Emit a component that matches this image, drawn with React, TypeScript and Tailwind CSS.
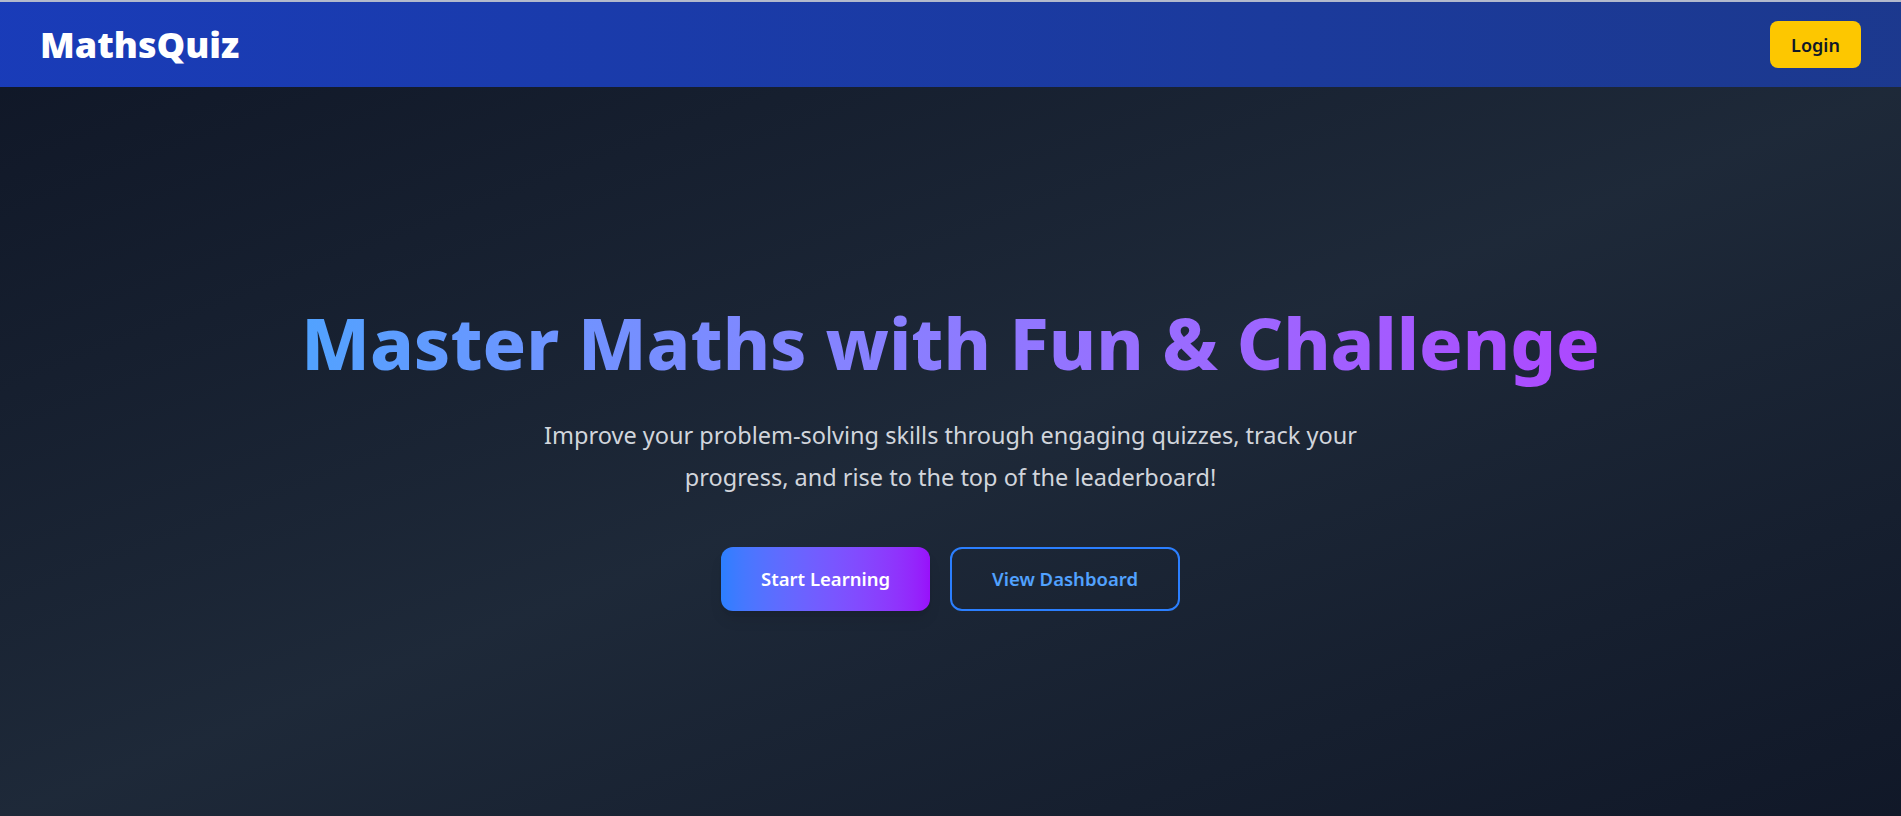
import React from 'react';

const Navbar: React.FC = () => (
  <nav className="bg-gradient-to-r from-blue-800 to-blue-900 shadow-lg">
    <div className="flex items-center justify-between px-10 h-[85px]">
      <span className="text-[36px] font-black text-white">MathsQuiz</span>
      <button className="bg-yellow-400 text-gray-900 text-lg font-semibold rounded-lg w-[91px] h-[47px]">
        Login
      </button>
    </div>
  </nav>
);

const Hero: React.FC = () => (
  <section className="flex-1 flex flex-col items-center justify-center text-center bg-gradient-to-br from-gray-900 via-gray-800 to-gray-900 px-6 pt-[13px]">
    <h1 className="text-[72px] font-extrabold leading-none pb-3 bg-gradient-to-r from-blue-400 to-purple-500 bg-clip-text text-transparent">
      Master Maths with Fun &amp; Challenge
    </h1>
    <p className="mt-6 max-w-[870px] text-[23.5px] leading-[42px] text-gray-300">
      Improve your problem-solving skills through engaging quizzes, track your progress, and rise to the top of the leaderboard!
    </p>
    <div className="mt-[49px] flex gap-5">
      <button className="h-16 px-10 rounded-xl bg-gradient-to-r from-blue-500 to-purple-600 text-white text-[18.5px] font-semibold shadow-lg">
        Start Learning
      </button>
      <button className="h-16 px-10 rounded-xl border-2 border-blue-500 text-blue-400 text-[18.5px] font-semibold">
        View Dashboard
      </button>
    </div>
  </section>
);

export default function App() {
  return (
    <div className="h-screen flex flex-col font-['Noto_Sans',sans-serif]">
      <div className="h-[2px] bg-[#b3bacd]" />
      <Navbar />
      <Hero />
    </div>
  );
}
